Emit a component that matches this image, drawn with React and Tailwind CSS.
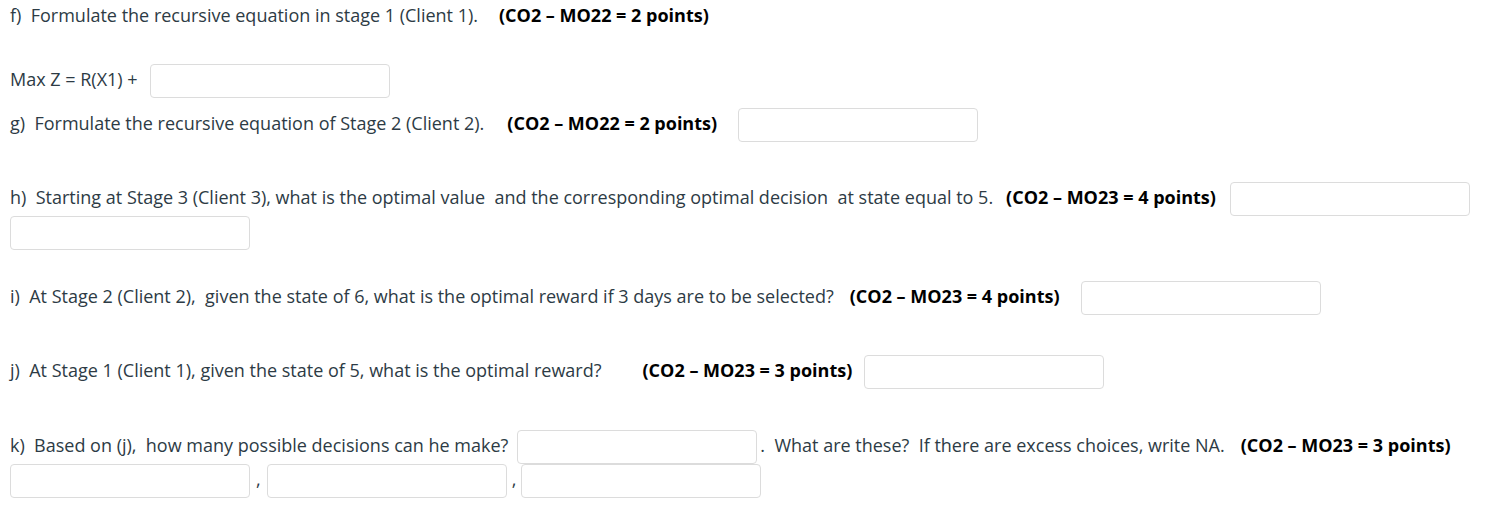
import React from "react";

const Box = ({ className = "" }) => (
    <input
        type="text"
        className={`h-[34px] w-[240px] shrink-0 rounded-[4px] border border-[#dcdcdc] bg-white px-2 outline-none ${className}`}
    />
);

const Pts = ({ children, className = "" }) => (
    <span className={`font-bold text-black ${className}`}>{children}</span>
);

export default function App() {
    return (
        <div
            className="min-h-screen bg-white px-[10px] text-[18px] leading-[30px] text-[#2d3b45]"
            style={{ fontFamily: '"Open Sans", "Liberation Sans", sans-serif' }}
        >
            <div className="flex h-[30px] items-start whitespace-pre">
                <span>f)  Formulate the recursive equation in stage 1 (Client 1).</span>
                <Pts className="ml-[21px]">(CO2 – MO22 = 2 points)</Pts>
            </div>

            <div className="mt-[34px] flex items-start whitespace-pre">
                <span>Max Z = R(X1) +</span>
                <Box className="ml-[12px]" />
            </div>

            <div className="mt-[10px] flex items-start whitespace-pre">
                <span>g)  Formulate the recursive equation of Stage 2 (Client 2).</span>
                <Pts className="ml-[23px]">(CO2 – MO22 = 2 points)</Pts>
                <Box className="ml-[21px]" />
            </div>

            <div className="mt-[40px] flex items-start whitespace-pre">
                <span>h)  Starting at Stage 3 (Client 3), what is the optimal value  and the corresponding optimal decision  at state equal to 5.</span>
                <Pts className="ml-[13px]">(CO2 – MO23 = 4 points)</Pts>
                <Box className="ml-[14px]" />
            </div>
            <div className="flex">
                <Box />
            </div>

            <div className="mt-[31px] flex items-start whitespace-pre">
                <span>i)  At Stage 2 (Client 2),  given the state of 6, what is the optimal reward if 3 days are to be selected?</span>
                <Pts className="ml-[16px]">(CO2 – MO23 = 4 points)</Pts>
                <Box className="ml-[21px]" />
            </div>

            <div className="mt-[40px] flex items-start whitespace-pre">
                <span>j)  At Stage 1 (Client 1), given the state of 5, what is the optimal reward?</span>
                <Pts className="ml-[41px]">(CO2 – MO23 = 3 points)</Pts>
                <Box className="ml-[12px]" />
            </div>

            <div className="mt-[41px] flex items-start whitespace-pre">
                <span>k)  Based on (j),  how many possible decisions can he make?</span>
                <Box className="ml-[9px]" />
                <span className="ml-[3px]">.  What are these?  If there are excess choices, write NA.</span>
                <Pts className="ml-[16px]">(CO2 – MO23 = 3 points)</Pts>
            </div>
            <div className="flex items-start">
                <Box />
                <span className="mx-[6px]">,</span>
                <Box />
                <span className="mx-[5px]">,</span>
                <Box />
            </div>
        </div>
    );
}
